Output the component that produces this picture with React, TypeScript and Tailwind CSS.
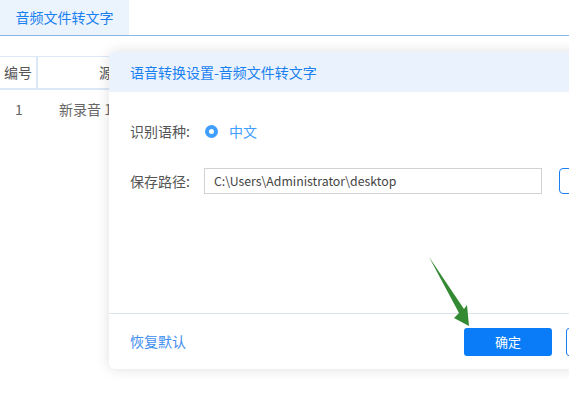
const FONT = "font-['Noto_Sans_CJK_SC','Noto_Sans',sans-serif]";

const Arrow = () => (
  <svg className="absolute inset-0 pointer-events-none" width="569" height="393" viewBox="0 0 569 393">
    <polygon
      points="429,257 464,309 467,305 469,326 454,318 459,313"
      fill="#338a33"
    />
  </svg>
);

export default function App() {
  return (
    <div className={`relative w-[569px] h-[393px] bg-white overflow-hidden ${FONT}`}>
      {/* Tabs */}
      <div className="flex h-[36px] border-b border-[#86b7ea]">
        <div className="w-[129px] bg-[#ebf3fd] text-[#1a7ff0] text-[14px] flex items-center justify-center">
          音频文件转文字
        </div>
      </div>

      {/* Table behind the dialog */}
      <div className="mt-[20px] border-t border-[#dbe8f7] text-[14px] text-[#666]">
        <div className="flex h-[33px] border-b-2 border-[#dbe8f7]">
          <div className="w-[38px] border-r-2 border-[#dbe8f7] flex items-center justify-center text-[#555]">编号</div>
          <div className="flex-1 flex items-center pl-[61px] text-[#555]">源文件名</div>
        </div>
        <div className="flex h-[38px]">
          <div className="w-[38px] flex items-center justify-center">1</div>
          <div className="flex-1 flex items-center pl-[21px]">新录音 1.mp3</div>
        </div>
      </div>

      {/* Dialog */}
      <div className="absolute left-[109px] top-[52px] w-[566px] h-[317px] bg-white rounded-[6px] shadow-[0_0_14px_rgba(0,0,0,0.13)] flex flex-col overflow-hidden">
        <div className="h-[40px] bg-[#eaf3fd] px-[21px] flex items-center text-[14px] text-[#1a7ff0]">
          语音转换设置-音频文件转文字
        </div>

        <div className="flex-1 px-[21px] pt-[26px] flex flex-col gap-[24px] text-[14px]">
          <div className="flex items-center h-[26px]">
            <span className="text-[#555] w-[74px]">识别语种:</span>
            <span className="w-[13px] h-[13px] rounded-full bg-[#409eff] flex items-center justify-center ml-[1px]">
              <span className="w-[5px] h-[5px] rounded-full bg-white" />
            </span>
            <span className="ml-[11px] text-[#409eff]">中文</span>
          </div>
          <div className="flex items-center h-[26px]">
            <span className="text-[#555] w-[74px]">保存路径:</span>
            <div className="w-[338px] h-[26px] border border-[#d2d2d2] flex items-center px-[9px] text-[12.3px] text-[#444]">
              C:\Users\Administrator\desktop
            </div>
            <button className="ml-[17px] w-[80px] h-[26px] border border-[#1a7ff0] rounded-[4px] text-[13px] text-[#1a7ff0]">
              浏览
            </button>
          </div>
        </div>

        <div className="h-[56px] border-t border-[#dde4ee] px-[21px] flex items-center">
          <span className="text-[14px] text-[#3d8ef0]">恢复默认</span>
          <button className="ml-auto w-[88px] h-[28px] rounded-[3px] bg-[#0a7cf7] text-white text-[13px]">
            确定
          </button>
          <button className="ml-[14px] w-[88px] h-[28px] rounded-[3px] border border-[#1a7ff0] text-[#1a7ff0] text-[13px]">
            取消
          </button>
        </div>
      </div>

      <Arrow />
    </div>
  );
}
